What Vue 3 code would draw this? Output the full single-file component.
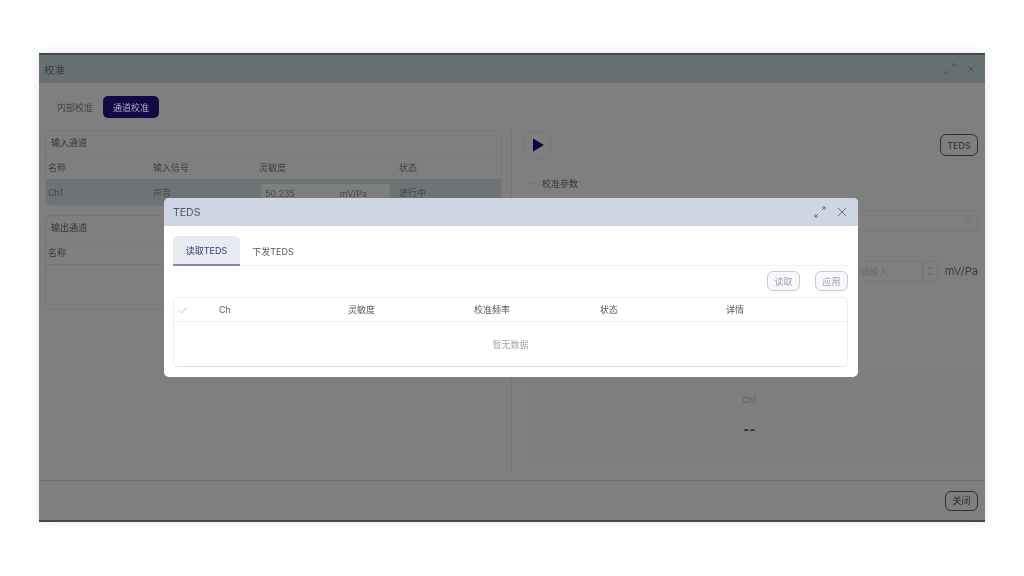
<script setup>
import { ref } from 'vue'

const activeTab = ref('read')
const columns = ['Ch', '灵敏度', '校准频率', '状态', '详情']
</script>

<template>
  <div class="page">
    <div class="window">
      <div class="win-head">
        <span>校准</span>
        <div class="win-icons">
          <svg width="12" height="12" viewBox="0 0 12 12"><path d="M1 11l3-3M1 8v3h3M11 1L8 4M8 1h3v3" /></svg>
          <svg width="10" height="10" viewBox="0 0 10 10"><path d="M1 1l8 8M9 1l-8 8" /></svg>
        </div>
      </div>

      <div class="win-body">
        <div class="left">
          <div class="mode-tabs">
            <span class="mode">内部校准</span>
            <span class="mode on">通道校准</span>
          </div>

          <div class="card input-card">
            <div class="card-title">输入通道</div>
            <div class="row head">
              <span>名称</span><span>输入信号</span><span>灵敏度</span><span>状态</span>
            </div>
            <div class="row cur">
              <span>Ch1</span><span>声音</span>
              <div class="sens"><span>50.235</span><span>mV/Pa</span></div>
              <span>进行中</span>
            </div>
          </div>

          <div class="card output-card">
            <div class="card-title">输出通道</div>
            <div class="row head line">
              <span>名称</span>
            </div>
          </div>
        </div>

        <div class="right">
          <div class="tool">
            <button class="play">
              <svg width="14" height="14" viewBox="0 0 14 14"><path d="M3 .5l11 6.5-11 6.5z" /></svg>
            </button>
            <button class="dark-btn">TEDS</button>
          </div>
          <div class="collapse">
            <svg width="8" height="8" viewBox="0 0 8 8"><path d="M1 2.5l3 3 3-3" /></svg>
            <span>校准参数</span>
          </div>
          <div class="select">
            <svg width="8" height="8" viewBox="0 0 8 8"><path d="M1 2.5l3 3 3-3" /></svg>
          </div>
          <div class="num-line">
            <div class="num">
              <span>请输入</span>
              <i>
                <svg width="6" height="14" viewBox="0 0 6 14"><path d="M1 5l2-2 2 2M1 9l2 2 2-2" /></svg>
              </i>
            </div>
            <span class="unit">mV/Pa</span>
          </div>
          <div class="result">
            <div class="res-name">Ch1</div>
            <div class="res-val">--</div>
          </div>
        </div>
      </div>

      <div class="win-foot">
        <button class="dark-btn">关闭</button>
      </div>

      <!-- TEDS dialog over the calibration window -->
      <div class="dialog">
        <div class="dlg-head">
          <span>TEDS</span>
          <div class="dlg-icons">
            <svg width="12" height="12" viewBox="0 0 12 12"><path d="M1 11l3-3M1 8v3h3M11 1L8 4M8 1h3v3" /></svg>
            <svg width="10" height="10" viewBox="0 0 10 10"><path d="M1 1l8 8M9 1l-8 8" /></svg>
          </div>
        </div>
        <div class="dlg-body">
          <div class="dlg-tabs">
            <span class="dlg-tab" :class="{ sel: activeTab === 'read' }" @click="activeTab = 'read'">读取TEDS</span>
            <span class="dlg-tab" :class="{ sel: activeTab === 'send' }" @click="activeTab = 'send'">下发TEDS</span>
          </div>
          <div class="dlg-actions">
            <button class="light-btn">读取</button>
            <button class="light-btn">应用</button>
          </div>
          <div class="table">
            <div class="t-head">
              <span class="t-check">
                <svg width="10" height="10" viewBox="0 0 10 10"><path d="M1 5.5l2.5 2.5L9 2" /></svg>
              </span>
              <span v-for="c in columns" :key="c">{{ c }}</span>
            </div>
            <div class="t-empty">暂无数据</div>
          </div>
        </div>
      </div>
    </div>
  </div>
</template>

<style scoped>
.page {
  width: 1024px;
  height: 576px;
  padding: 53px 39px 54px;
  box-sizing: border-box;
  background: #fff;
  font-family: "Inter", "Noto Sans CJK SC", sans-serif;
  overflow: hidden;
  filter: blur(0.35px);
}

.window {
  position: relative;
  height: 469px;
  display: flex;
  flex-direction: column;
  background: #7f7f7f;
  border-top: 2px solid #45494b;
  border-bottom: 2px solid #45494b;
  box-sizing: border-box;
  box-shadow: 0 0 10px rgba(0, 0, 0, 0.1);
  color: #3a3d3e;
}

button {
  font-family: inherit;
  padding: 0;
}

.win-head {
  height: 28px;
  display: flex;
  align-items: center;
  justify-content: space-between;
  padding: 0 9px 0 5px;
  background: #697073;
  font-size: 10.5px;
  color: #35393b;
}

.win-icons {
  display: flex;
  align-items: center;
  gap: 10px;
}

.win-icons svg path {
  fill: none;
  stroke: #50565a;
  stroke-width: 1;
}

.win-body {
  flex: 1;
  display: flex;
  min-height: 0;
}

.left {
  width: 472px;
  flex-shrink: 0;
  padding: 13px 9px 0 6px;
  box-sizing: border-box;
}

.mode-tabs {
  display: flex;
  align-items: center;
  gap: 10px;
  height: 22px;
  padding-left: 12px;
  font-size: 9px;
}

.mode {
  color: #3f4344;
}

.mode.on {
  display: flex;
  align-items: center;
  justify-content: center;
  width: 56px;
  height: 22px;
  border-radius: 5px;
  background: #120a45;
  color: #aeabc6;
}

.card {
  border: 1px solid #767878;
  border-radius: 6px;
  font-size: 9px;
  color: #3a3d3e;
  box-sizing: border-box;
}

.input-card {
  margin-top: 12px;
  height: 76px;
}

.output-card {
  margin-top: 9px;
  height: 95px;
}

.card-title {
  height: 25px;
  line-height: 24px;
  padding-left: 5px;
  color: #333637;
}

.row {
  display: grid;
  grid-template-columns: 105px 106px 140px 1fr;
  align-items: center;
  padding-left: 2px;
  box-sizing: border-box;
}

.row.head {
  height: 23px;
  padding-bottom: 1px;
  border-top: 1px solid #787a7a;
  color: #3a3d3e;
}

.row.head.line {
  height: 24px;
  border-bottom: 1px solid #767878;
}

.row.cur {
  height: 26px;
  background: #6e7476;
  border-radius: 0 0 6px 6px;
  color: #45494a;
}

.sens {
  width: 129px;
  height: 22px;
  margin: 5px 0 0 2px;
  padding: 0 23px 3px 4px;
  display: flex;
  justify-content: space-between;
  align-items: center;
  box-sizing: border-box;
  background: #7d7f7f;
  border-radius: 4px;
}

.right {
  flex: 1;
  min-width: 0;
  margin: 47px 0 8px;
  padding: 0 7px 0 10px;
  border-left: 1px solid #767878;
}

.tool {
  display: flex;
  align-items: center;
  justify-content: space-between;
  height: 30px;
}

.play {
  width: 29px;
  height: 29px;
  margin-top: -1px;
  display: flex;
  align-items: center;
  justify-content: center;
  background: #7f7f7f;
  border: 1px solid #747676;
  border-radius: 50%;
}

.play path {
  fill: #0c0835;
}

.dark-btn {
  background: transparent;
  border: 1px solid #2c3033;
  border-radius: 6px;
  color: #2a2d30;
  font-size: 9px;
}

.tool .dark-btn {
  width: 38px;
  height: 22px;
}

.collapse {
  display: flex;
  align-items: center;
  gap: 6px;
  height: 16px;
  margin: 15px 0 0 6px;
  font-size: 9px;
  color: #333637;
}

.collapse svg path,
.select svg path,
.num i path {
  fill: none;
  stroke: #666a6b;
  stroke-width: 1;
}

.select {
  height: 19px;
  margin-top: 19px;
  display: flex;
  align-items: center;
  justify-content: flex-end;
  padding-right: 5px;
  border: 1px solid #777979;
  border-radius: 4px;
}

.num-line {
  display: flex;
  align-items: center;
  justify-content: flex-end;
  gap: 7px;
  height: 20px;
  margin-top: 30px;
}

.num {
  width: 80px;
  height: 21px;
  display: flex;
  align-items: center;
  justify-content: space-between;
  box-sizing: border-box;
  border: 1px solid #777979;
  border-radius: 4px;
  font-size: 9px;
  color: #686b6c;
}

.num span {
  padding-left: 2px;
}

.num i {
  width: 14px;
  height: 19px;
  display: flex;
  align-items: center;
  justify-content: center;
  border-left: 1px solid #707373;
}

.unit {
  font-size: 11px;
  color: #383b3c;
}

.result {
  margin: 89px 0 0 7px;
  height: 94px;
  box-sizing: border-box;
  padding-top: 25px;
  background: #7d7e7e;
  text-align: center;
}

.res-name {
  font-size: 8px;
  line-height: 10px;
  color: #5a5d5e;
  padding-right: 8px;
}

.res-val {
  margin-top: 15px;
  padding-right: 8px;
  font-size: 13px;
  line-height: 18px;
  font-weight: 800;
  color: #2c2f30;
}

.win-foot {
  height: 39px;
  display: flex;
  align-items: center;
  justify-content: flex-end;
  padding-right: 7px;
  border-top: 1px solid #6c6e6e;
}

.win-foot .dark-btn {
  width: 33px;
  height: 20px;
}

.dialog {
  position: absolute;
  left: 125px;
  top: 143px;
  width: 694px;
  height: 179px;
  display: flex;
  flex-direction: column;
  background: #fff;
  border-radius: 5px;
  overflow: hidden;
  color: #4a4d50;
}

.dlg-head {
  height: 28px;
  flex-shrink: 0;
  display: flex;
  align-items: center;
  justify-content: space-between;
  padding: 0 11px 0 9px;
  background: #ced6e4;
  font-size: 10.5px;
  color: #4d5560;
}

.dlg-icons {
  display: flex;
  align-items: center;
  gap: 11px;
}

.dlg-icons svg path {
  fill: none;
  stroke: #6b7280;
  stroke-width: 1;
}

.dlg-body {
  flex: 1;
  padding: 10px 10px 0 9px;
}

.dlg-tabs {
  display: flex;
  height: 30px;
  box-sizing: border-box;
  border-bottom: 1px solid #f0f1f3;
  font-size: 9px;
}

.dlg-tab {
  width: 67px;
  height: 30px;
  flex-shrink: 0;
  display: flex;
  align-items: center;
  justify-content: center;
  box-sizing: border-box;
  color: #55585c;
  border-radius: 5px 5px 0 0;
  cursor: pointer;
}

.dlg-tab + .dlg-tab {
  width: 66px;
}

.dlg-tab.sel {
  background: #e9ebf2;
  border-bottom: 2px solid #8b87a9;
  color: #3b3277;
}

.dlg-actions {
  display: flex;
  justify-content: flex-end;
  gap: 15px;
  height: 20px;
  margin-top: 5px;
}

.light-btn {
  width: 33px;
  height: 20px;
  background: #f8f8fb;
  border: 1px solid #c9cbd2;
  border-radius: 6px;
  color: #a09cc0;
  font-size: 9px;
}

.table {
  margin-top: 6px;
  height: 70px;
  box-sizing: border-box;
  border: 1px solid #eceef0;
  border-bottom-color: #dcdfe3;
  border-radius: 5px;
  font-size: 9px;
}

.t-head {
  height: 24px;
  box-sizing: border-box;
  display: grid;
  grid-template-columns: 45px 129px 126px 126px 126px 1fr;
  align-items: center;
  border-bottom: 1px solid #f0f1f3;
  color: #55585c;
}

.t-check {
  padding-left: 4px;
  display: flex;
}

.t-check path {
  fill: none;
  stroke: #c9cbcf;
  stroke-width: 1;
}

.t-empty {
  height: 44px;
  display: flex;
  align-items: center;
  justify-content: center;
  color: #a3a5a8;
}
</style>

<style>
html,
body {
  margin: 0;
  background: #fff;
}
</style>
